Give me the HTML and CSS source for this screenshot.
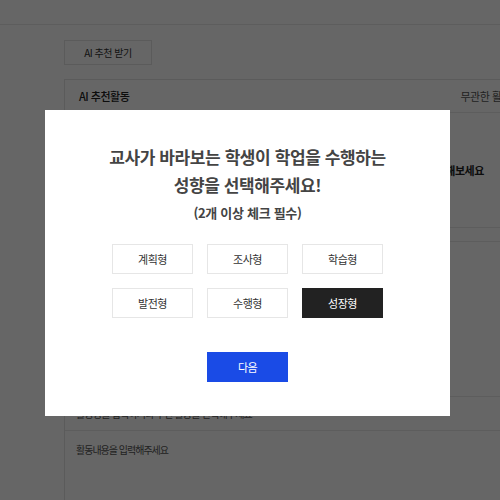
FILE: index.html
```html
<!DOCTYPE html>
<html lang="ko">
<head>
  <meta charset="UTF-8">
  <meta name="viewport" content="width=device-width, initial-scale=1.0">
  <title>AI 추천활동</title>
  <link rel="stylesheet" href="styles.css">
</head>
<body>
  <div class="top-bar"></div>

  <div class="content">
    <button class="btn-recommend">AI 추천 받기</button>

    <div class="card">
      <div class="card-head">
        <span class="card-title">AI 추천활동</span>
        <span class="card-option">무관한 활동 보기</span>
      </div>
      <div class="card-message">
        <p>AI 추천 받기 버튼을 눌러 지금 바로 학생에게 맞는 창의적 체험활동을 추천해보세요</p>
      </div>
      <div class="card-gap"></div>
      <div class="card-list"></div>
      <div class="card-row">
        <span>활동명을 입력하거나 추천 활동을 선택해주세요</span>
      </div>
      <div class="card-text">
        <span>활동내용을 입력해주세요</span>
      </div>
    </div>
  </div>

  <!-- 성향 선택 팝업 -->
  <div class="overlay">
    <div class="modal">
      <h2 class="modal-title">교사가 바라보는 학생이 학업을 수행하는<br>성향을 선택해주세요!</h2>
      <p class="modal-sub">(2개 이상 체크 필수)</p>
      <div class="type-grid">
        <button class="type-btn">계획형</button>
        <button class="type-btn">조사형</button>
        <button class="type-btn">학습형</button>
        <button class="type-btn">발전형</button>
        <button class="type-btn">수행형</button>
        <button class="type-btn selected">성장형</button>
      </div>
      <button class="btn-next">다음</button>
    </div>
  </div>
</body>
</html>
```

FILE: styles.css
```css
body {
  font-family: "Noto Sans CJK KR", "Noto Sans", sans-serif;
  background-color: #fff;
  margin: 0;
  padding: 0;
  height: 500px;
  overflow: hidden;
  color: #333;
}
button {
  font-family: inherit;
  cursor: pointer;
}
.top-bar {
  height: 24px;
  border-bottom: 1px solid #e8e8e8;
}
.content {
  padding: 15px 0 0 64px;
}
.btn-recommend {
  display: block;
  width: 88px;
  height: 25px;
  padding: 0;
  background: #fff;
  border: 1px solid #e3e3e3;
  font-size: 10px;
  letter-spacing: -0.5px;
  color: #333;
}
.card {
  width: 482px;
  margin-top: 14px;
  border: 1px solid #e3e3e3;
  border-bottom: none;
  height: 440px;
}
.card-head {
  height: 32px;
  padding: 0 14px;
  display: flex;
  align-items: center;
  justify-content: space-between;
  border-bottom: 1px solid #e8e8e8;
}
.card-title {
  font-size: 11px;
  font-weight: 500;
  letter-spacing: -0.5px;
  color: #222;
}
.card-option {
  font-size: 11px;
  letter-spacing: -0.5px;
  color: #555;
  white-space: nowrap;
}
.card-message {
  height: 114px;
  display: flex;
  align-items: center;
  justify-content: center;
  border-bottom: 1px solid #e8e8e8;
}
.card-message p {
  margin: 0;
  font-size: 11px;
  font-weight: bold;
  letter-spacing: -0.5px;
  color: #222;
  white-space: nowrap;
}
.card-gap {
  height: 13px;
  border-bottom: 1px solid #e8e8e8;
}
.card-list {
  height: 154px;
  border-bottom: 1px solid #e8e8e8;
}
.card-row {
  height: 33px;
  padding: 0 11px;
  display: flex;
  align-items: center;
  border-bottom: 1px solid #e8e8e8;
  font-size: 10px;
  letter-spacing: -0.8px;
  color: #555;
}
.card-text {
  padding: 11px 11px;
  font-size: 10px;
  letter-spacing: -1px;
  color: #555;
}

.overlay {
  position: fixed;
  top: 0;
  left: 0;
  right: 0;
  bottom: 0;
  background-color: rgba(0, 0, 0, 0.6);
  display: flex;
  justify-content: center;
  align-items: center;
  padding: 26px 5px 0 0;
}
.modal {
  width: 405px;
  box-sizing: border-box;
  padding: 33px 0 34px;
  background-color: #fff;
  text-align: center;
  display: flex;
  flex-direction: column;
  align-items: center;
}
.modal-title {
  margin: 0;
  font-size: 17px;
  line-height: 28px;
  font-weight: bold;
  letter-spacing: -0.4px;
  color: #444;
}
.modal-sub {
  margin: 4px 0 0;
  font-size: 13px;
  line-height: 20px;
  font-weight: bold;
  letter-spacing: -0.3px;
  color: #444;
}
.type-grid {
  margin-top: 21px;
  display: grid;
  grid-template-columns: repeat(3, 81px);
  grid-auto-rows: 30px;
  gap: 14px;
}
.type-btn {
  padding: 0;
  background: #fff;
  border: 1px solid #e6e6e6;
  font-size: 11px;
  letter-spacing: -0.5px;
  color: #333;
}
.type-btn.selected {
  background-color: #222;
  border-color: #222;
  color: #fff;
}
.btn-next {
  margin-top: 34px;
  width: 81px;
  height: 30px;
  padding: 0;
  border: none;
  background-color: #1a4be6;
  font-size: 11px;
  letter-spacing: -0.5px;
  color: #fff;
}
```
